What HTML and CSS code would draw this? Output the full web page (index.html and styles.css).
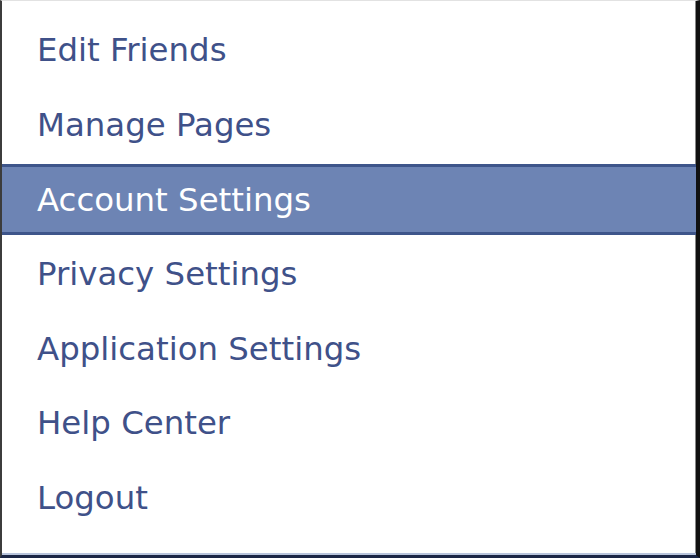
FILE: index.html
```html
<!DOCTYPE html>
<html>
<head>
<meta charset="utf-8">
<link rel="stylesheet" href="styles.css">
</head>
<body>
<div class="menu">
  <ul class="list">
    <li class="item">Edit Friends</li>
    <li class="item">Manage Pages</li>
    <li class="item active">Account Settings</li>
    <li class="item">Privacy Settings</li>
    <li class="item">Application Settings</li>
    <li class="item">Help Center</li>
    <li class="item">Logout</li>
  </ul>
</div>
</body>
</html>
```
FILE: styles.css
```css
html, body {
  margin: 0;
  padding: 0;
  background: #ffffff;
}
.menu {
  width: 700px;
  height: 558px;
  box-sizing: border-box;
  background: #ffffff;
  border-top: 1px solid #e2e2e2;
  border-left: 2px solid #3c3c3c;
  border-right: 4px solid #111111;
  border-bottom: 3px solid #1b2645;
  box-shadow: inset 0 -2px 0 #b8c4dc, inset -1px 0 0 #888888;
  padding-top: 13.7px;
}
.list {
  list-style: none;
  margin: 0;
  padding: 0;
  display: flex;
  flex-direction: column;
  gap: 3.67px;
}
.item {
  height: 71px;
  box-sizing: border-box;
  display: flex;
  align-items: center;
  padding-left: 35px;
  font-family: "DejaVu Sans", Verdana, sans-serif;
  font-size: 32.4px;
  color: #3f5189;
  border-top: 3px solid transparent;
  border-bottom: 3px solid transparent;
}
.item.active {
  background: #6d84b4;
  color: #ffffff;
  border-top-color: #3e558a;
  border-bottom-color: #3e558a;
}
```
